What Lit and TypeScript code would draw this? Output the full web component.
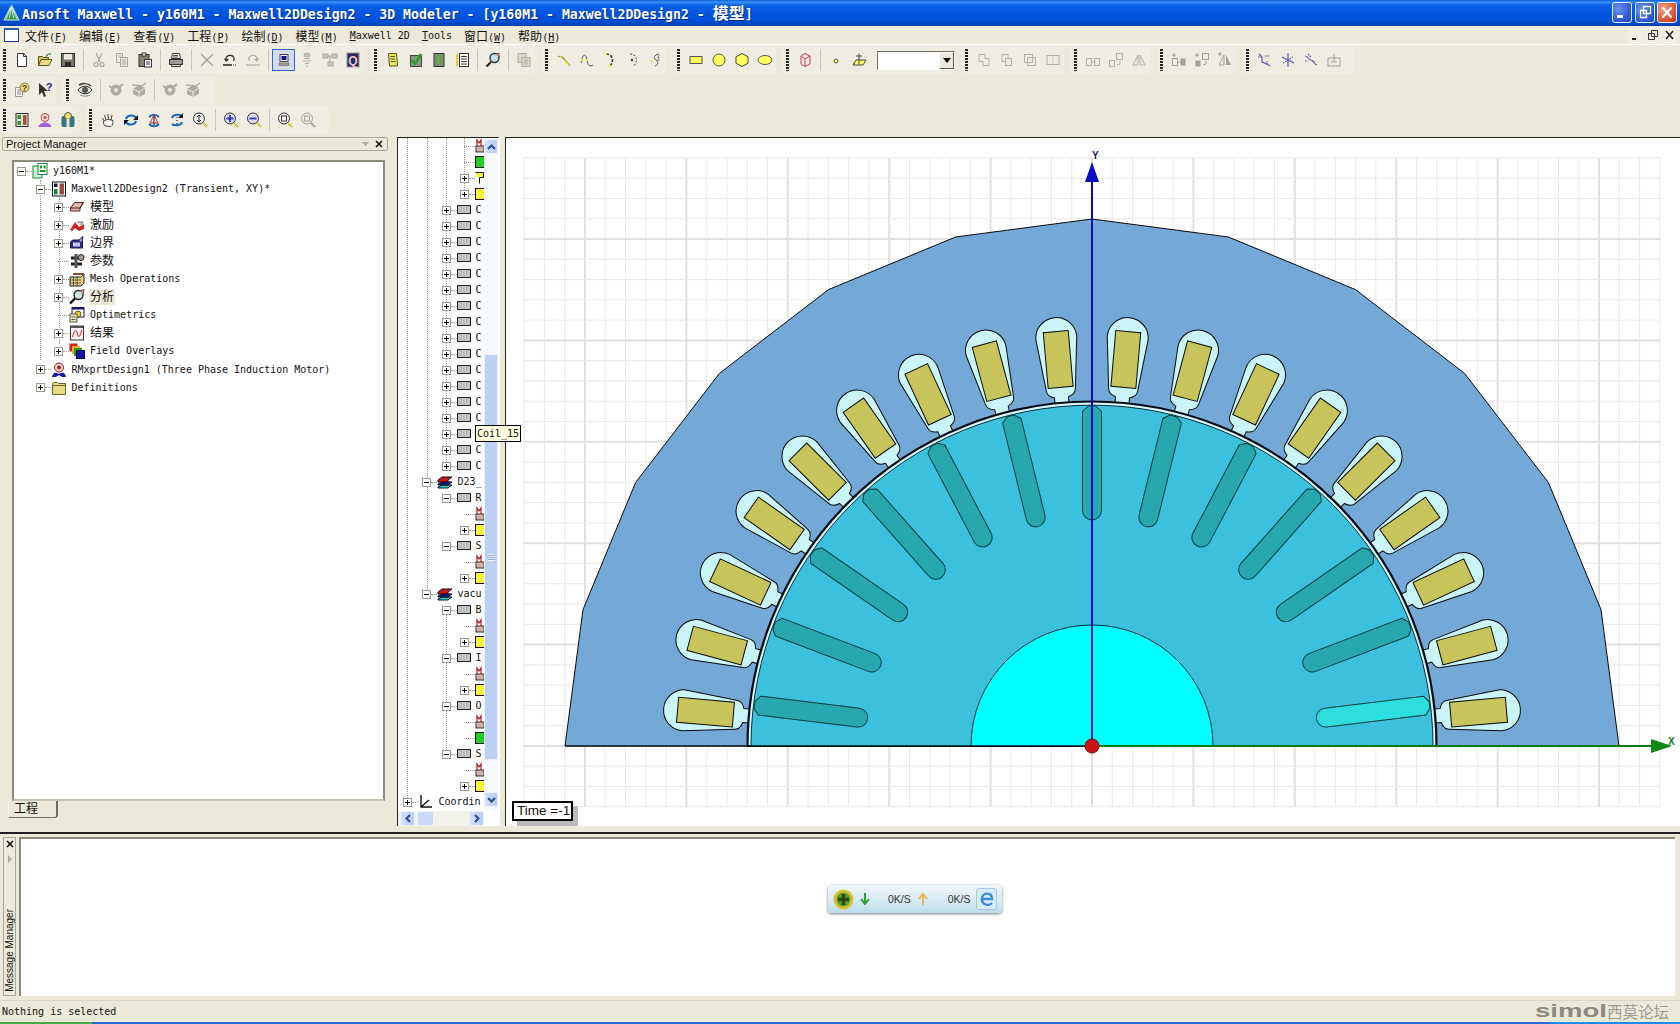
import { LitElement, html, svg, css, nothing } from "lit";
import { customElement } from "lit/decorators.js";

const icons: Record<string, any> = {
  // toolbar, row 1
  new: svg`<path d="M3.5 1.5h6l3 3v10h-9z" fill="#fff" stroke="#333"/><path d="M9.5 1.5v3h3" fill="none" stroke="#333"/>`,
  open: svg`<path d="M1.5 13.5v-9h4l1 1h5v2" fill="#d8c25c" stroke="#55551c"/><path d="M1.5 13.5l2.5-6h11l-3 6z" fill="#ecdb86" stroke="#55551c"/><path d="M9 4.5c1-2 3-3 5-2.5" stroke="#3a8a3a" fill="none" stroke-width="1.4"/>`,
  save: svg`<rect x="1.5" y="1.5" width="13" height="13" fill="#77776c" stroke="#2c2c2c"/><rect x="4" y="2" width="8" height="5.5" fill="#e8e8e0"/><rect x="5" y="10" width="6" height="4.5" fill="#2c2c2c"/>`,
  cut: svg`<g fill="none" stroke="#a8a69a" stroke-width="1.2"><path d="M5 1l4 9M11 1l-4 9"/><circle cx="5" cy="12.5" r="2"/><circle cx="11" cy="12.5" r="2"/></g>`,
  copy: svg`<g fill="#ece9d8" stroke="#a8a69a"><path d="M2.5 1.5h6v9h-6z"/><path d="M6.5 5.5h7v9h-7z"/><path d="M8 8h4M8 10h4M8 12h4M4 4h3" fill="none"/></g>`,
  paste: svg`<rect x="2" y="2.5" width="10" height="12" fill="#88836c" stroke="#333"/><rect x="5" y="1" width="4" height="3" fill="#ddd" stroke="#333"/><rect x="7.5" y="7.5" width="7" height="7.5" fill="#fff" stroke="#333"/><path d="M9 10h4M9 12h4" stroke="#333"/>`,
  print: svg`<path d="M4.5 1.5h7l1 5h-9z" fill="#fff" stroke="#333"/><path d="M1.5 7.5h13v5h-13z" fill="#9a9a90" stroke="#333"/><path d="M3.5 12.5h9v2h-9z" fill="#fff" stroke="#333"/><path d="M5 3.5h5M5 5h5" stroke="#555"/>`,
  del: svg`<path d="M2 2l12 12M14 2L2 14" stroke="#a8a69a" stroke-width="1.6"/>`,
  undo: svg`<path d="M4 9c-1-4 2-6 5-5.5s4 3 2.5 5.5" fill="none" stroke="#333" stroke-width="1.3"/><path d="M1.5 6.5l3 3.5 2.5-3z" fill="#333"/><path d="M1 13h9" stroke="#333" stroke-width="1.6"/><path d="M11 13h4" stroke="#333" stroke-dasharray="1 1"/>`,
  redo: svg`<path d="M12 9c1-4-2-6-5-5.5s-4 3-2.5 5.5" fill="none" stroke="#b0ae9e" stroke-width="1.2"/><path d="M14.5 6.5l-3 3.5-2.5-3z" fill="#b0ae9e"/><path d="M1 13h14" stroke="#b0ae9e" stroke-width="1.2"/>`,
  monitor: svg`<rect x="4" y="2.5" width="8" height="7" fill="#fff" stroke="#444"/><rect x="5.5" y="4" width="5" height="4" fill="#14148c"/><rect x="3" y="11" width="10" height="2.5" fill="#9a9a9a" stroke="#555" stroke-width=".5"/>`,
  stack: svg`<g fill="none" stroke="#b0ae9e"><ellipse cx="8" cy="3" rx="3" ry="2" fill="#c4c2b4"/><path d="M5 6.5h6M4 9h8M6 11.5h4M7 14h2"/></g>`,
  net: svg`<g fill="#c8c6b8" stroke="#aaa89a"><rect x="1" y="2" width="5" height="4"/><rect x="10" y="2" width="5" height="4"/><rect x="6" y="10" width="5" height="4"/><path d="M6 4h4M8 4v6" fill="none"/></g>`,
  q: svg`<rect x="2" y="1" width="12" height="14" fill="#28285c" stroke="#999"/><text x="8" y="12.5" text-anchor="middle" font-size="12" font-weight="700" font-family="Liberation Sans" fill="#f0c8c8">Q</text>`,
  scroll: svg`<path d="M3.5 1.5h8l1 12.5h-8z" fill="#e6e65a" stroke="#555518"/><path d="M5.5 4.5H10M5.5 7H10M6 9.5h4.5" stroke="#55551c"/>`,
  check: svg`<rect x="2.5" y="3.5" width="11" height="11" fill="#8a9a80" stroke="#444"/><path d="M4 8l3 4 6-10" fill="none" stroke="#2aa02a" stroke-width="2.6"/>`,
  excl: svg`<rect x="3" y="1.5" width="10" height="13" fill="#7e8e6a" stroke="#333"/><text x="8" y="12" text-anchor="middle" font-size="12" font-weight="700" font-family="Liberation Sans" fill="#2cd02c">!</text>`,
  list: svg`<rect x="2" y="2" width="2" height="12" fill="#ecc93c"/><rect x="5.5" y="1.5" width="9" height="13" fill="#fff" stroke="#333"/><path d="M7 4.5h6M7 7h6M7 9.5h6M7 12h6" stroke="#333"/>`,
  lens: svg`<circle cx="9.5" cy="6" r="4.500" fill="#bfe4e8" stroke="#333" stroke-width="1.4"/><path d="M6 10l-4.500 4.500" stroke="#222" stroke-width="2.2"/><path d="M11 2l3-1v4" fill="#c98" stroke="#844"/>`,
  pages: svg`<g fill="#dcd9c8" stroke="#b0ae9e"><rect x="2" y="1.5" width="8" height="9"/><rect x="6" y="5.5" width="8" height="9"/></g><path d="M8 8h4M8 10h4M8 12h4" stroke="#b0ae9e"/>`,
  line1: svg`<path d="M2 5h4l8 8" transform="rotate(4 8 8)" fill="none" stroke="#555"/><path d="M3 3.5l4 3M8 8l5 5" stroke="#dcdc30" stroke-width="1.5"/>`,
  line2: svg`<path d="M2 11c2-11 5-9 6-3s3 7 6 5" fill="none" stroke="#555"/><circle cx="3" cy="8" r="1.2" fill="#e4e430"/><circle cx="8" cy="8" r="1.2" fill="#e4e430"/>`,
  arc1: svg`<path d="M4 2c6 0 9 6 4 12" fill="none" stroke="#333" stroke-dasharray="3 1.5" stroke-width="1.5"/><circle cx="4" cy="2" r="1.2" fill="#e4e430"/><circle cx="8" cy="14" r="1.2" fill="#e4e430"/>`,
  arc2: svg`<path d="M5 2c6 0 9 6 4 12" fill="none" stroke="#444" stroke-dasharray="2 1.5"/><circle cx="7" cy="8" r="1.2" fill="#333"/>`,
  arc3: svg`<path d="M11 2c-5 1-6 4-3 6s2 5-1 6" fill="none" stroke="#555"/><text x="9" y="9" font-size="8" font-family="Liberation Serif" fill="#445">f</text><circle cx="4" cy="9" r="1" fill="#e4e430"/>`,
  rect: svg`<rect x="2" y="4.5" width="12" height="7" fill="#ffff5c" stroke="#555"/>`,
  circle: svg`<circle cx="8" cy="8" r="6" fill="#ffff5c" stroke="#555"/>`,
  hex: svg`<path d="M8 1.5l6 3.2v6.600l-6 3.200-6-3.200V4.700z" fill="#ffff5c" stroke="#444"/>`,
  ellipse: svg`<ellipse cx="8" cy="8" rx="7" ry="4.500" fill="#ffff5c" stroke="#555"/>`,
  cube: svg`<path d="M8 1.5l5 2.5v8l-5 2.500-4-2.500V4zM4 4l4 3 5-3M8 7v7.500" fill="#f4e8e8" stroke="#c04050"/>`,
  point: svg`<circle cx="8" cy="9" r="2" fill="#ffff5c" stroke="#555"/>`,
  plane: svg`<path d="M5 8h10l-3 5H2z" fill="#ffff5c" stroke="#444"/><path d="M8 1.5v11M5 4h6" stroke="#444" fill="none"/>`,
  uni: svg`<path d="M3 2.5h6v4h4v7H7v-4H3z" fill="none" stroke="#b4b2a4"/>`,
  sub: svg`<rect x="3" y="2.5" width="6" height="7" fill="none" stroke="#b4b2a4"/><rect x="6.5" y="6.5" width="6" height="7" fill="#ece9d8" stroke="#b4b2a4"/>`,
  inter: svg`<rect x="2.5" y="2.5" width="8" height="8" fill="none" stroke="#b4b2a4"/><rect x="5.5" y="5.5" width="8" height="8" fill="none" stroke="#b4b2a4"/>`,
  split: svg`<rect x="2" y="3.5" width="12" height="9" fill="none" stroke="#b4b2a4"/><path d="M8 3.5v9" stroke="#b4b2a4" stroke-dasharray="1 1"/>`,
  move: svg`<rect x="1.5" y="6.5" width="5" height="7" fill="none" stroke="#b4b2a4"/><rect x="9.5" y="6.5" width="5" height="7" fill="none" stroke="#b4b2a4"/><path d="M6 10h5" stroke="#b4b2a4"/>`,
  rot: svg`<rect x="8.5" y="1.5" width="6" height="6" fill="none" stroke="#b4b2a4"/><rect x="1.5" y="8.5" width="5" height="6" fill="none" stroke="#b4b2a4"/><path d="M12 9v3l-3 1" fill="none" stroke="#b4b2a4"/>`,
  mirror: svg`<path d="M7 3v10H2zM9 3v10h5z" fill="none" stroke="#b4b2a4"/>`,
  movep: svg`<rect x="1.5" y="6.5" width="5" height="7" fill="none" stroke="#a4a294"/><rect x="9.5" y="6.5" width="5" height="7" fill="#a4a294"/><path d="M3 1v4M1 3h4M6 10h4" stroke="#a4a294"/>`,
  rotp: svg`<rect x="8.5" y="1.5" width="6" height="6" fill="none" stroke="#a4a294"/><rect x="1.5" y="8.5" width="5" height="6" fill="#a4a294"/><path d="M3 1v4M1 3h4M12 9v3l-3 1" fill="none" stroke="#a4a294"/>`,
  mirp: svg`<path d="M7 3v10H2z" fill="none" stroke="#a4a294"/><path d="M9 3v10h5z" fill="#a4a294"/><path d="M3 0v4M1 2h4" stroke="#a4a294"/>`,
  tp1: svg`<g fill="none" stroke="#5454a8" stroke-width="1.2"><path d="M2 2l3 3v5l5 2 3 2"/><path d="M1 5h4M8 4h4M10 9v5" stroke-dasharray="1.5 1"/></g>`,
  tp2: svg`<g fill="none" stroke="#5454a8" stroke-width="1.2"><path d="M8 1v14M2 5l12 6"/><path d="M3 11l10-6" stroke-dasharray="1.5 1"/></g>`,
  tp3: svg`<g fill="none" stroke="#5454a8" stroke-width="1.2"><path d="M2 4c4 0 3 4 6 4s3 5 6 5"/><path d="M5 2l3 3M9 9l3 1M2 9h3" stroke-dasharray="1.5 1"/></g>`,
  tp4: svg`<rect x="2" y="6" width="12" height="8" fill="none" stroke="#a4a294"/><path d="M8 2v8M5 10h6" stroke="#a4a294"/>`,
  // row 2
  help: svg`<path d="M1.5 5.500h7v9h-7z" fill="#fff" stroke="#999"/><path d="M3 8h4M3 10h4M3 12h4" stroke="#888"/><circle cx="10.5" cy="5.500" r="4.500" fill="#ecdc70" stroke="#7a7a3a"/><text x="10.5" y="9" text-anchor="middle" font-size="9" font-weight="700" font-family="Liberation Sans" fill="#444">?</text>`,
  what: svg`<path d="M2 1v12l3-3 2 5 2-1-2-5h4z" fill="#333"/><text x="12" y="9" text-anchor="middle" font-size="11" font-weight="700" font-family="Liberation Sans" fill="#28287c">?</text>`,
  eye: svg`<path d="M1 8c3-5 11-5 14 0-3 5-11 5-14 0z" fill="#e0e0d8" stroke="#333"/><circle cx="8" cy="8" r="3" fill="#555"/><path d="M2 3c4-2 9-2 12 1" stroke="#444" fill="none" stroke-width="1.5"/><path d="M3 13c3 1.500 8 1.500 10 0" stroke="#888" fill="none"/>`,
  eyeg: svg`<circle cx="8" cy="8" r="5.500" fill="#aeac9e"/><path d="M1 4l7 4 7-6" stroke="#aeac9e" stroke-width="2" fill="none"/><circle cx="8" cy="8" r="2" fill="#ece9d8"/>`,
  eyeb: svg`<path d="M2 7l6-4 6 3v6l-6 3-6-3z" fill="#aeac9e"/><path d="M2 7l6 3 6-4M8 10v5" stroke="#ece9d8" fill="none"/><path d="M1 3l10 1 4-3" stroke="#aeac9e" stroke-width="1.5" fill="none"/>`,
  // row 3
  bars: svg`<rect x="2" y="1.5" width="12" height="13" fill="#e6e4d4" stroke="#333"/><rect x="3.5" y="3" width="3.5" height="4" fill="#2e9a3a"/><rect x="3.5" y="9" width="3.5" height="4" fill="#2e9a3a"/><rect x="9" y="3" width="3.5" height="10" fill="#a8503c"/>`,
  person: svg`<circle cx="8" cy="5.500" r="4" fill="#f0d8d0" stroke="#b05050"/><circle cx="8" cy="5.500" r="1.5" fill="#b05050"/><path d="M1.5 15c1-6 12-6 13 0z" fill="#a060d8"/>`,
  people: svg`<rect x="1.5" y="4" width="6" height="11" rx="2" fill="#307880"/><rect x="8.5" y="4" width="6" height="11" rx="2" fill="#307880"/><circle cx="8" cy="4" r="3.5" fill="#e8dc70" stroke="#555"/><rect x="6.5" y="7" width="3" height="7" fill="#e8e4d0"/>`,
  hand: svg`<path d="M4 9L2.500 6M6 8L4.500 3M8.500 7.500L8 2M11 8l1-5M5 14C3.500 12 3 10 4 9l2-1 2.500-.5L11 8l2 .5c0 3-.5 5-2 6z" fill="#fff" stroke="#444"/>`,
  rotA: svg`<g fill="none" stroke="#1468b8" stroke-width="2"><path d="M3 7c1-4 8-5 10-1"/><path d="M13 9c-1 4-8 5-10 1"/></g><path d="M15 3v5h-5zM1 13V8h5z" fill="#14141c"/>`,
  rotB: svg`<g fill="none" stroke="#1468b8" stroke-width="2"><path d="M3 5c3-3 7-3 10 0"/><path d="M3 12c3 3 7 3 10 0"/></g><path d="M8 3l-4 8h8z" fill="none" stroke="#c03030"/><path d="M8 4v9" stroke="#14141c"/>`,
  rotC: svg`<g fill="none" stroke="#1468b8" stroke-width="2"><path d="M3 6c1-4 8-4 10-2"/><path d="M13 10c-1 4-8 4-10 2"/></g><path d="M8 5v1M8 8v1M8 11v1" stroke="#222" stroke-width="1.2"/><path d="M14 1v5H9z" fill="#14141c"/>`,
  zoomI: svg`<circle cx="7" cy="6.500" r="5.500" fill="#eee" stroke="#333"/><path d="M7 3v7M5 5l2-2 2 2M5 8l2 2 2-2" stroke="#333" fill="none"/><path d="M11 11l4 4" stroke="#d8c830" stroke-width="2.2"/>`,
  zoomP: svg`<circle cx="7" cy="6.500" r="5.500" fill="#d8d8ec" stroke="#333"/><path d="M7 3v7M3.500 6.500h7" stroke="#3030b8" stroke-width="1.8"/><path d="M11 11l4 4" stroke="#d8c830" stroke-width="2.2"/>`,
  zoomM: svg`<circle cx="7" cy="6.500" r="5.500" fill="#d8d8ec" stroke="#333"/><path d="M3.500 6.500h7" stroke="#3030b8" stroke-width="1.8"/><path d="M11 11l4 4" stroke="#d8c830" stroke-width="2.2"/>`,
  zoomF: svg`<circle cx="7" cy="6.500" r="5.500" fill="#eee" stroke="#333"/><rect x="4.500" y="4" width="5" height="5" fill="#fff" stroke="#333"/><path d="M11 11l4 4" stroke="#d8c830" stroke-width="2.2"/>`,
  zoomD: svg`<circle cx="7" cy="6.500" r="5.500" fill="#ece9d8" stroke="#a8a69a"/><rect x="4.500" y="4" width="5" height="5" fill="none" stroke="#a8a69a"/><path d="M11 11l4 4" stroke="#a8a69a" stroke-width="2.2"/>`,
  // project tree
  proj: svg`<rect x="1" y="3" width="9" height="12" fill="#d8f4d8" stroke="#0a8a3a"/><rect x="6" y=".5" width="9" height="11" fill="#fff" stroke="#0a8a3a"/><rect x="8" y="2.5" width="2" height="3" fill="#18a018"/><rect x="11.500" y="2.5" width="2" height="3" fill="#18a018"/><rect x="8" y="7" width="5.500" height="2" fill="#18a018"/>`,
  design: svg`<rect x="1.5" y="1" width="13" height="14" fill="#fff" stroke="#111"/><rect x="3" y="2.5" width="3.5" height="3.5" fill="#222"/><rect x="3" y="8" width="3.5" height="5.500" fill="#118a44"/><rect x="8.5" y="2.5" width="4.500" height="11" fill="#9c4a3c"/>`,
  model: svg`<path d="M1.5 9l4-5.500h9L11 9v3H1.500z" fill="#e0b8b0" stroke="#5c1c1c"/><path d="M1.5 9H11l3.500-5.500" fill="none" stroke="#5c1c1c"/>`,
  excite: svg`<path d="M1 13l5-8 4 5 5-3v5l-5 2-4-3-3 3z" fill="#d02424"/><path d="M8 5h6l-2 3" fill="#c8c8c8" stroke="#777"/>`,
  bound: svg`<path d="M1.5 13V7l2-2h10v8z" fill="#30307e" stroke="#141450"/><rect x="4" y="7.5" width="7" height="4" fill="#c8c8f0"/><path d="M10 5l4-3.500-1 6" fill="#aaaacc" stroke="#141450"/>`,
  param: svg`<path d="M2 5h8M2 11h11" stroke="#222" stroke-width="3"/><path d="M7 1v14" stroke="#555" stroke-width="3"/><circle cx="12" cy="4.500" r="3" fill="#999" stroke="#222"/>`,
  mesh: svg`<path d="M1 6h11l3-3v9l-3 3H1z" fill="#e8d080" stroke="#222"/><path d="M4.500 6v9M8 6v9M1 9h11M1 12h11" stroke="#222" stroke-dasharray="1.5 .8"/><path d="M4 3h11" stroke="#8c4a3c" stroke-width="2"/>`,
  analysis: svg`<circle cx="9.5" cy="6" r="4.500" fill="#d0e4e8" stroke="#222" stroke-width="1.4"/><path d="M6 9.500l-5 5" stroke="#111" stroke-width="2.4"/><path d="M11 2l4-1.500-1 5" fill="#c89a90" stroke="#844"/>`,
  optim: svg`<rect x="3" y=".5" width="12" height="9.500" fill="#fff" stroke="#14146c"/><rect x="3" y=".5" width="12" height="2" fill="#14146c"/><circle cx="9" cy="7" r="3" fill="#ecd020" stroke="#6a5a10"/><rect x="1" y="7" width="7" height="8" fill="#f4e8b0" stroke="#555"/><path d="M2.500 10h4M2.500 12.500h4" stroke="#555"/>`,
  result: svg`<rect x="1.5" y="1" width="13" height="14" fill="#fff0f0" stroke="#333"/><rect x="1.5" y="1" width="13" height="2" fill="#555"/><path d="M3.500 12c2-8 4-8 5-3s3 2 4-4" fill="none" stroke="#c02020"/>`,
  field: svg`<rect x=".5" y=".5" width="8" height="8" fill="#d02020"/><rect x="3" y="3" width="8" height="8" fill="#e8b020"/><rect x="5" y="5" width="8" height="8" fill="#18a018"/><rect x="7.500" y="7.500" width="8" height="8" fill="#1414a8" stroke="#0a0a50"/>`,
  rmx: svg`<circle cx="8" cy="5.500" r="4.500" fill="#f0d8d0" stroke="#8c1c1c"/><circle cx="8" cy="5.500" r="2" fill="#a81c1c"/><path d="M1 15c1-5 4-5 7-3 3-2 6-2 7 3h-4l-3-2-3 2z" fill="#1414b8"/>`,
  folder: svg`<path d="M1.5 14.500v-11l1-1h4l1 1h7v11z" fill="#e8dc84" stroke="#66662a"/><path d="M1.5 5.500h13" stroke="#66662a"/>`,
  // object tree
  gray: svg`<rect x=".5" y="3.5" width="13" height="8" fill="#c0c0c0" stroke="#222"/>`,
  layer: svg`<path d="M1 13l4-2h10l-4 3H1z" fill="#20d0d0" stroke="#111"/><path d="M1 10l4-2h10l-4 3H1z" fill="#1818a0" stroke="#111"/><path d="M1 6l4-3h10l-4 3v2H1z" fill="#c81818" stroke="#111"/>`,
  m: svg`<rect x="1" y="8" width="8" height="6" fill="#d0b4a8" stroke="#333"/><path d="M2 8V2l2 3 2-3v6" fill="none" stroke="#b01818" stroke-width="1.2"/>`,
  green: svg`<rect x=".5" y="2.5" width="9" height="11" fill="#20d020" stroke="#111"/>`,
  yellow: svg`<rect x=".5" y="2.5" width="9" height="11" fill="#f4f43c" stroke="#111"/>`,
  yhook: svg`<path d="M.5 2.500h8v5h-4v6" fill="none" stroke="#111"/><path d="M1 3h7v4H1z" fill="#f4f43c"/>`,
  coord: svg`<path d="M3 1v12h11M3 13l8-7" fill="none" stroke="#111" stroke-width="1.4"/>`,
};

const ic = (name: string) =>
  html`<svg class="ic" width="16" height="16" viewBox="0 0 16 16">${icons[name]}</svg>`;

// "|" = grip, "/" = separator, "#" = combo box, "*" prefix = pressed button
const toolbars = [
  "| new open save / cut copy paste / print / del undo redo / *monitor stack net q",
  "| scroll check excl list / lens / pages",
  "| line1 line2 arc1 arc2 arc3",
  "| rect circle hex ellipse",
  "| cube / point plane #",
  "| uni sub inter split",
  "| move rot mirror",
  "| movep rotp mirp",
  "| tp1 tp2 tp3 tp4",
];
const toolbars2 = ["| help what", "| eye / eyeg eyeb / eyeg eyeb"];
const toolbars3 = ["| bars person people", "| hand rotA rotB rotC zoomI / zoomP zoomM / zoomF zoomD"];

const projectTree = [
  [0, "-", "proj", "y160M1*"],
  [1, "-", "design", "Maxwell2DDesign2 (Transient, XY)*"],
  [2, "+", "model", "模型"],
  [2, "+", "excite", "激励"],
  [2, "+", "bound", "边界"],
  [2, "", "param", "参数"],
  [2, "+", "mesh", "Mesh Operations"],
  [2, "+", "analysis", "分析", true],
  [2, "", "optim", "Optimetrics"],
  [2, "+", "result", "结果"],
  [2, "+", "field", "Field Overlays"],
  [1, "+", "rmx", "RMxprtDesign1 (Three Phase Induction Motor)"],
  [1, "+", "folder", "Definitions"],
];

const solid = (n: string) => [2, "-", "gray", n];

const sub = (last: string) => [
  [3, "", "m", ""],
  last === "green" ? [3, "", "green", ""] : [3, "+", "yellow", ""],
];

const objectTree: any[] = [
  [3, "", "m", ""],
  [3, "", "green", ""],
  [3, "+", "yhook", ""],
  [3, "+", "yellow", ""],
  // the row at index 14 sits under the Coil_15 tooltip
  ...Array.from({ length: 17 }, (_, i) => [2, "+", "gray", i === 14 ? "" : "C"]),
  [1, "-", "layer", "D23_"],
  solid("R"),
  ...sub("y"),
  solid("S"),
  ...sub("y"),
  [1, "-", "layer", "vacu"],
  solid("B"),
  ...sub("y"),
  solid("I"),
  ...sub("y"),
  solid("O"),
  ...sub("green"),
  solid("S"),
  ...sub("y"),
  [0, "+", "coord", "Coordin"],
];

@customElement("motor-view")
export class MotorView extends LitElement {
  static styles = css`
    :host {
      display: block;
      width: 100%;
      height: 100%;
    }
    svg {
      display: block;
    }
  `;

  render() {
    const cx = 1092;
    const cy = 746;
    const step = 20.28;
    const lines = [];
    for (let i = -28; i <= 28; i++) {
      const x = cx + i * step;
      const major = i % 5 === 0;
      lines.push(svg`<line x1=${x} x2=${x} y1="158" y2="807" stroke=${major ? "#e0e0e0" : "#e8e8e8"} stroke-width=${major ? 2 : 1}/>`);
    }
    for (let i = -29; i <= 3; i++) {
      const y = cy + i * step;
      const major = i % 5 === 0;
      lines.push(svg`<line x1="524" x2="1660" y1=${y} y2=${y} stroke=${major ? "#e0e0e0" : "#e8e8e8"} stroke-width=${major ? 2 : 1}/>`);
    }

    const outer = [];
    for (let a = 180; a >= 0; a -= 15) {
      const t = (a * Math.PI) / 180;
      outer.push(`${(cx + 527 * Math.cos(t)).toFixed(1)},${(cy - 527 * Math.sin(t)).toFixed(1)}`);
    }

    const slots = [];
    for (let a = 5; a < 180; a += 10) {
      slots.push(svg`<g transform="translate(${cx} ${cy}) rotate(${-a})">
        <path d="M344 -7 L350 -7 Q352 -14 357 -14.5 L409.5 -20.5 A20.5 20.5 0 0 1 409.5 20.5 L357 14.5 Q352 14 350 7 L344 7 Z" fill="#c9f5f7" stroke="#0a0a0a" stroke-width="1"/>
        <rect x="360" y="-12.5" width="56" height="25" fill="#c8c45c" stroke="#0a0a0a" stroke-width="1"/>
      </g>`);
    }

    // 26 rotor bars over the full circle, 13 of them in this half
    const bars = [];
    for (let i = -6; i <= 6; i++) {
      const a = 90 + (i * 360) / 26;
      bars.push(svg`<g transform="translate(${cx} ${cy}) rotate(${-a})">
        <path d="M235.5 -9.5 L335 -9.5 L340 -3.5 L340 3.5 L335 9.5 L235.5 9.5 A9.5 9.5 0 0 1 235.5 -9.5 Z" fill=${i === -6 ? "#2edede" : "#26a8ae"} stroke="#0a3a3a" stroke-width="1"/>
      </g>`);
    }

    const half = (r: number) => `M${cx - r} ${cy} A${r} ${r} 0 0 1 ${cx + r} ${cy} Z`;

    return html`<svg width="1175" height="689" viewBox="505 137 1175 689">
      <rect x="505" y="137" width="1175" height="689" fill="#fff"/>
      ${lines}
      <polygon points=${outer.join(" ")} fill="#74a9d7" stroke="#0a0a0a" stroke-width="1"/>
      ${slots}
      <path d=${half(344.5)} fill="#d4f6f8" stroke="#0a0a14" stroke-width="2.2"/>
      <path d=${half(341)} fill="#3bc0dd" stroke="#0a3038" stroke-width="1"/>
      ${bars}
      <path d=${half(121)} fill="#0ff" stroke="#0a3038" stroke-width="1"/>
      <line x1="565" x2=${cx} y1=${cy} y2=${cy} stroke="#0a0a0a" stroke-width="1"/>
      <line x1=${cx} x2="1655" y1=${cy} y2=${cy} stroke="#0c7a14" stroke-width="2"/>
      <path d="M1651 739l21 7-21 7z" fill="#0c8a14"/>
      <text x="1668" y="745" font-family="Liberation Sans" font-size="10" font-weight="700" fill="#0c7a14">X</text>
      <line x1=${cx} x2=${cx} y1=${cy} y2="175" stroke="#0a0ac8" stroke-width="2"/>
      <path d="M${cx - 7} 182l7-20 7 20z" fill="#0a0ac8"/>
      <text x="1092" y="159" font-family="Liberation Sans" font-size="10" font-weight="700" fill="#14146c">Y</text>
      <circle cx=${cx} cy=${cy} r="7" fill="#cc1414" stroke="#7a0a0a"/>
    </svg>`;
  }
}

@customElement("app-root")
export class AppRoot extends LitElement {
  static styles = css`
    :host {
      display: flex;
      flex-direction: column;
      position: relative;
      width: 1680px;
      height: 1024px;
      overflow: hidden;
      background: #ece9d8;
      font-family: "DejaVu Sans Mono", "Noto Sans CJK SC", monospace;
      font-size: 10px;
      color: #111;
    }
    .ic {
      display: block;
      flex: none;
    }

    /* title bar */
    .title {
      height: 26px;
      flex: none;
      display: flex;
      align-items: center;
      padding: 0 3px 1px 3px;
      box-sizing: border-box;
      background: linear-gradient(#0a5ad8 0, #3b93f7 2px, #0a62e8 5px, #0055e0 14px, #0250d8 21px, #0040b0 26px);
      color: #fff;
      font-weight: 700;
      font-size: 13.2px;
      text-shadow: 1px 1px 0 #0a2a80;
      white-space: pre;
    }
    .title .cjk {
      font-size: 16px;
      font-family: "Noto Sans CJK SC", sans-serif;
      line-height: 16px;
    }
    .logo {
      margin-right: 2px;
    }
    .winbtns {
      margin-left: auto;
      display: flex;
      gap: 2.5px;
    }
    .winbtn {
      width: 20px;
      height: 21px;
      border: 1px solid #e8eefc;
      border-radius: 3px;
      box-sizing: border-box;
      background: radial-gradient(circle at 30% 30%, #6a92ec, #2a55d0 70%, #2048b0);
    }
    .winbtn.close {
      background: radial-gradient(circle at 30% 30%, #f0a088, #d8502c 70%, #b83818);
    }
    .winbtn svg {
      display: block;
    }

    /* menu bar */
    .menu {
      height: 19px;
      flex: none;
      display: flex;
      align-items: center;
      gap: 12px;
      padding: 0 0 0 4px;
      border-bottom: 1px solid #fff;
      box-sizing: border-box;
      font-size: 10px;
      white-space: pre;
    }
    .menu .docicon {
      margin-right: -7px;
    }
    .menu .cjk {
      font-size: 12px;
    }
    .mdi {
      margin-left: auto;
      display: flex;
      gap: 1px;
      margin-right: 2px;
    }
    .mdi div {
      width: 16px;
      height: 16px;
      background: #f1efe4;
    }

    /* toolbars */
    .tbrow {
      height: 30px;
      flex: none;
      display: flex;
      gap: 7px;
      align-items: center;
    }
    .tb {
      display: flex;
      align-items: center;
      height: 28px;
      background: #efece1;
    }
    .tbrow .tb:last-child {
      padding-right: 10px;
    }
    .grip {
      width: 10px;
      height: 22px;
      flex: none;
      box-sizing: border-box;
      background: repeating-linear-gradient(#222 0 2px, transparent 2px 3px) 3px 0 / 3px 100% no-repeat;
    }
    .btn {
      width: 23px;
      height: 22px;
      display: flex;
      align-items: center;
      justify-content: center;
      flex: none;
      box-sizing: border-box;
    }
    .btn.pressed {
      border: 1px solid #316ac5;
      background: #d4dcec;
    }
    .sep {
      width: 8px;
      height: 22px;
      flex: none;
      background: linear-gradient(#c8c5b4, #c8c5b4) center / 1px 100% no-repeat;
    }
    .combo {
      width: 78px;
      height: 19px;
      margin-left: 7px;
      flex: none;
      box-sizing: border-box;
      background: #fff;
      border: 1px solid;
      border-color: #716f64 #fff #fff #716f64;
      display: flex;
      justify-content: flex-end;
    }
    .combo i {
      width: 15px;
      height: 17px;
      background: #ece9d8;
      border: 1px solid;
      box-sizing: border-box;
      border-color: #fff #555 #555 #fff;
      display: flex;
      align-items: center;
      justify-content: center;
    }
    .combo i::after {
      content: "";
      border: 4px solid transparent;
      border-top: 5px solid #000;
      border-bottom: 0;
    }

    /* main area */
    .main {
      height: 697px;
      flex: none;
      display: flex;
      padding-top: 2px;
      box-sizing: border-box;
      position: relative;
    }
    .left {
      width: 397px;
      flex: none;
      padding: 0 9px 0 2px;
      box-sizing: border-box;
      display: flex;
      flex-direction: column;
    }
    .dock {
      height: 14px;
      flex: none;
      box-sizing: border-box;
      border: 1px solid #aca899;
      border-radius: 2px;
      display: flex;
      align-items: center;
      padding: 0 4px 0 3px;
      font: 11px "Liberation Sans", sans-serif;
    }
    .dock b {
      margin-left: auto;
      display: flex;
      gap: 6px;
      align-items: center;
    }
    .tree {
      margin: 9px 3px 0 10px;
      height: 641px;
      flex: none;
      background: #fff;
      border: 2px solid;
      border-color: #8c8a7c #8c8a7c #c8c5b4 #8c8a7c;
      box-sizing: border-box;
      position: relative;
    }
    .row {
      display: flex;
      align-items: center;
      white-space: pre;
      position: relative;
    }
    .tree .row {
      height: 18.05px;
    }
    .exp {
      width: 9px;
      height: 9px;
      flex: none;
      box-sizing: border-box;
      border: 1px solid #9c9a8c;
      background:
        linear-gradient(#000, #000) center / 5px 1px no-repeat,
        #fff;
    }
    .exp.plus {
      background:
        linear-gradient(#000, #000) center / 5px 1px no-repeat,
        linear-gradient(#000, #000) center / 1px 5px no-repeat,
        #fff;
    }
    .leaf {
      width: 9px;
      flex: none;
    }
    .dots {
      flex: none;
      width: 6px;
      height: 0;
      border-top: 1px dotted #999;
    }
    .leaf + .dots {
      margin-left: -5px;
      width: 11px;
    }
    .tree .ic {
      margin-right: 4px;
    }
    .label {
      padding: 1px 1px;
      line-height: 14px;
    }
    .label.cjk {
      font-size: 12px;
    }
    .label.hl {
      background: #ece9d8;
    }
    .guide {
      position: absolute;
      border-left: 1px dotted #999;
    }
    .tab {
      margin-left: 6px;
      width: 50px;
      height: 17px;
      box-sizing: border-box;
      border: 1px solid #716f64;
      border-top: 0;
      border-left-color: #fff;
      border-radius: 0 0 3px 0;
      border-right-width: 2px;
      font-size: 12px;
      padding-left: 5px;
      line-height: 16px;
    }

    /* object tree */
    .pane {
      width: 103px;
      height: 689px;
      flex: none;
      border: solid #222;
      border-width: 1px 0 0 1px;
      border-right: 2px solid #fff;
      background: #fff;
      box-sizing: border-box;
      display: flex;
      flex-direction: column;
      position: relative;
    }
    .panebody {
      display: flex;
      height: 673px;
      flex: none;
    }
    .objs {
      width: 86px;
      flex: none;
      overflow: hidden;
      position: relative;
    }
    .objs .row {
      height: 16px;
    }
    .objs .ic.small {
      margin-right: 0;
    }
    .objs .label {
      padding: 0 0 0 5px;
    }
    .vbar {
      width: 14px;
      flex: none;
      background: #f6f8fa;
      display: flex;
      flex-direction: column;
      padding-top: 1px;
    }
    .sb {
      height: 15px;
      flex: none;
      background: linear-gradient(90deg, #d4e0fb, #b8ccf6);
      border: 1px solid #eef2fc;
      border-radius: 2px;
      box-sizing: border-box;
      display: flex;
      align-items: center;
      justify-content: center;
    }
    .thumb {
      margin-top: 200px;
      height: 406px;
      flex: none;
      background: #bcd0f6;
      border: 1px solid #eef2fc;
      border-radius: 2px;
      box-sizing: border-box;
      display: flex;
      align-items: center;
      justify-content: center;
    }
    .thumb i {
      width: 7px;
      height: 7px;
      background: repeating-linear-gradient(#eef2fc 0 1px, #8ea8dc 1px 2px);
    }
    .vbar .down {
      margin-top: 32px;
    }
    .hbar {
      height: 15px;
      flex: none;
      display: flex;
      background: #f2f1ea;
      padding-left: 2px;
      width: 84px;
    }
    .hbar .sb {
      width: 15px;
    }
    .hthumb {
      width: 17px;
      height: 15px;
      margin-left: 2px;
      background: #cbd9f6;
      border: 1px solid #eef2fc;
      border-radius: 2px;
      box-sizing: border-box;
    }
    .hbar .right {
      margin-left: auto;
    }
    .tip {
      position: absolute;
      left: 475px;
      top: 290px;
      width: 46px;
      height: 17px;
      box-sizing: border-box;
      background: #ffffe1;
      border: 1px solid #000;
      line-height: 15px;
      padding-left: 1px;
      z-index: 2;
    }

    .view {
      margin-left: 5px;
      width: 1175px;
      height: 689px;
      flex: none;
      position: relative;
    }
    .view::before {
      content: "";
      position: absolute;
      left: 0;
      top: 0;
      right: 0;
      bottom: 0;
      border: solid #222;
      border-width: 1px 0 0 1px;
      pointer-events: none;
    }
    .time {
      position: absolute;
      left: 7px;
      top: 664px;
      width: 61px;
      height: 20px;
      box-sizing: border-box;
      background: #fff;
      border: 2px solid #000;
      box-shadow: 5px 5px 0 #bbb;
      font: 13.5px/16px "Liberation Sans", sans-serif;
      padding-left: 3px;
      white-space: nowrap;
    }

    /* message manager */
    .messages {
      height: 168px;
      flex: none;
      border-top: 2px solid #222;
      display: flex;
      padding: 3px 5px 4px 3px;
      box-sizing: border-box;
      gap: 3px;
      position: relative;
    }
    .msgstrip {
      width: 13px;
      flex: none;
      border: 1px solid #aca899;
      box-sizing: border-box;
      display: flex;
      flex-direction: column;
      align-items: center;
      padding-top: 2px;
    }
    .msgstrip .arrow {
      margin-top: 7px;
    }
    .msgstrip span {
      margin-top: auto;
      writing-mode: vertical-rl;
      transform: rotate(180deg);
      font: 10px "Liberation Sans", sans-serif;
      padding-top: 3px;
    }
    .msgbody {
      flex: 1;
      background: #fff;
      border: solid #8c8a7c;
      border-width: 2px 0 0 2px;
    }
    .speed {
      position: absolute;
      left: 828px;
      top: 51px;
      width: 174px;
      height: 28px;
      box-sizing: border-box;
      border-radius: 4px;
      background: linear-gradient(#f0f7fb, #cfe6f2 70%, #b9dcec);
      box-shadow: 0 1px 3px #777;
      display: flex;
      align-items: center;
      padding: 0 5px;
      font: 10.5px "Liberation Sans", sans-serif;
      color: #333;
    }
    .speed .down {
      margin-left: 6px;
    }
    .speed .kb1 {
      margin-left: 18px;
    }
    .speed .up {
      margin-left: 7px;
    }
    .speed .kb2 {
      margin-left: 20px;
    }
    .speed .ie {
      margin-left: auto;
      width: 21px;
      height: 22px;
      border: 1px solid #a8c8de;
      border-radius: 3px;
      box-sizing: border-box;
      display: flex;
      align-items: center;
      justify-content: center;
      background: #d8ecf6;
    }

    /* status bar */
    .status {
      height: 22px;
      flex: none;
      border-top: 1px solid #d8d5c4;
      box-sizing: border-box;
      padding: 4px 0 0 2px;
      line-height: 14px;
      position: relative;
    }
    .wm {
      position: absolute;
      left: 1535px;
      top: 0;
      display: flex;
      align-items: center;
      height: 20px;
      color: #8a8a80;
    }
    .wm b {
      font: 700 19px/20px "Liberation Sans", sans-serif;
      display: inline-block;
      width: 70px;
      transform: scaleX(1.45);
      transform-origin: 0 50%;
    }
    .wm span {
      margin-left: 2px;
      font: 15.5px/20px "Noto Sans CJK SC", sans-serif;
      color: #9c9c94;
    }
    .task {
      height: 4px;
      flex: none;
      background: linear-gradient(90deg, #4caa4c 0 92px, #2a6ad8 92px 1550px, #1c8ee8 1550px);
    }
  `;

  private toolbar(spec: string) {
    return html`<div class="tb">
      ${spec.split(" ").map((t) => {
        if (t === "|") return html`<div class="grip"></div>`;
        if (t === "/") return html`<div class="sep"></div>`;
        if (t === "#") return html`<div class="combo"><i></i></div>`;
        if (t[0] === "*") return html`<div class="btn pressed">${ic(t.slice(1))}</div>`;
        return html`<div class="btn">${ic(t)}</div>`;
      })}
    </div>`;
  }

  private treeRow(row: any[]) {
    const [lvl, exp, icon, label, hl] = row;
    const isCjk = /[^\x00-\x7f]/.test(label);
    return html`<div class="row" style="padding-left:${3 + lvl * 18.5}px">
      ${exp ? html`<div class="exp ${exp === "+" ? "plus" : ""}"></div>` : html`<div class="leaf"></div>`}
      <div class="dots"></div>
      ${ic(icon)}
      <span class="label ${isCjk ? "cjk" : ""} ${hl ? "hl" : ""}">${label}</span>
    </div>`;
  }

  private objRow(row: any[]) {
    const [lvl, exp, icon, label] = row;
    const pad = [4.5, 23.5, 43.5, 61.5][lvl];
    const w = icon === "layer" || icon === "coord" ? 16 : 14;
    return html`<div class="row" style="padding-left:${pad}px">
      ${exp ? html`<div class="exp ${exp === "+" ? "plus" : ""}"></div>` : html`<div class="leaf"></div>`}
      <div class="dots"></div>
      <svg class="ic small" width=${w} height="16" viewBox="0 0 ${w} 16">${icons[icon]}</svg>
      ${label ? html`<span class="label">${label}</span>` : nothing}
    </div>`;
  }

  render() {
    // vertical guide lines of the object tree: x, top, height (inside the list)
    const objGuides = [
      [9, 0, 664],
      [28.5, 0, 456],
      [48, 0, 328],
      [66, 0, 56],
      [48, 472, 144],
    ];
    return html`
      <div class="title">
        <svg class="logo" width="17" height="18" viewBox="0 0 17 18">
          <path d="M8.5 1L1 16h15z" fill="#2e9a4a" stroke="#d8e8d8"/>
          <path d="M8.5 3l-2 11M8.5 3l2 11M8.5 3L3 15M8.5 3L14 15" stroke="#fff" stroke-width=".8"/>
        </svg>
        <span>Ansoft Maxwell - y160M1 - Maxwell2DDesign2 - 3D Modeler - [y160M1 - Maxwell2DDesign2 - <span class="cjk">模型</span>]</span>
        <div class="winbtns">
          <div class="winbtn"><svg width="18" height="19"><rect x="4" y="12" width="6" height="3" fill="#fff"/></svg></div>
          <div class="winbtn"><svg width="18" height="19"><path d="M7.5 3.5h7v7h-7zM4.5 7.5h6v7h-6z" fill="none" stroke="#fff" stroke-width="1.3"/></svg></div>
          <div class="winbtn close"><svg width="18" height="19"><path d="M4.5 4.5l9 10M13.5 4.5l-9 10" stroke="#fff" stroke-width="2"/></svg></div>
        </div>
      </div>

      <div class="menu">
        <svg class="docicon" width="16" height="16" viewBox="0 0 16 16"><rect x=".5" y="1.5" width="14" height="13" fill="#fff" stroke="#1c3c8c"/><path d="M0 2h15" stroke="#2a5ab8" stroke-width="2"/></svg>
        <span><span class="cjk">文件</span>(<u>F</u>)</span>
        <span><span class="cjk">编辑</span>(<u>E</u>)</span>
        <span><span class="cjk">查看</span>(<u>V</u>)</span>
        <span><span class="cjk">工程</span>(<u>P</u>)</span>
        <span><span class="cjk">绘制</span>(<u>D</u>)</span>
        <span><span class="cjk">模型</span>(<u>M</u>)</span>
        <span><u>M</u>axwell 2D</span>
        <span><u>T</u>ools</span>
        <span><span class="cjk">窗口</span>(<u>W</u>)</span>
        <span><span class="cjk">帮助</span>(<u>H</u>)</span>
        <div class="mdi">
          <div><svg width="16" height="16"><rect x="4" y="11" width="4" height="2" fill="#222"/></svg></div>
          <div><svg width="16" height="16"><path d="M6.5 3.5h6v6h-6zM3.5 6.5h6v6h-6z" fill="#f1efe4" stroke="#333"/></svg></div>
          <div><svg width="16" height="16"><path d="M4 4l7 8M11 4l-7 8" stroke="#222" stroke-width="1.6"/></svg></div>
        </div>
      </div>

      <div class="tbrow">${toolbars.map((t) => this.toolbar(t))}</div>
      <div class="tbrow">${toolbars2.map((t) => this.toolbar(t))}</div>
      <div class="tbrow">${toolbars3.map((t) => this.toolbar(t))}</div>

      <div class="main">
        <div class="left">
          <div class="dock">
            Project Manager
            <b>
              <svg width="7" height="5"><path d="M0 0h7L3.5 4z" fill="#aaa"/></svg>
              <svg width="8" height="8"><path d="M1 1l6 6M7 1l-6 6" stroke="#111" stroke-width="1.6"/></svg>
            </b>
          </div>
          <div class="tree">
            <div class="guide" style="left:26px;top:18px;height:180px"></div>
            <div class="guide" style="left:45px;top:36px;height:146px"></div>
            ${projectTree.map((r) => this.treeRow(r))}
          </div>
          <div class="tab">工程</div>
        </div>

        <div class="pane">
          <div class="panebody">
            <div class="objs">
              ${objGuides.map(([x, t, h]) => html`<div class="guide" style="left:${x}px;top:${t}px;height:${h}px"></div>`)}
              ${objectTree.map((r) => this.objRow(r))}
            </div>
            <div class="vbar">
              <div class="sb"><svg width="9" height="6"><path d="M1 5l3.5-3.5L8 5" fill="none" stroke="#2a4a90" stroke-width="2"/></svg></div>
              <div class="thumb"><i></i></div>
              <div class="sb down"><svg width="9" height="6"><path d="M1 1l3.5 3.5L8 1" fill="none" stroke="#2a4a90" stroke-width="2"/></svg></div>
            </div>
          </div>
          <div class="hbar">
            <div class="sb"><svg width="6" height="9"><path d="M5 1L1.500 4.500 5 8" fill="none" stroke="#2a4a90" stroke-width="2"/></svg></div>
            <div class="hthumb"></div>
            <div class="sb right"><svg width="6" height="9"><path d="M1 1l3.5 3.500L1 8" fill="none" stroke="#2a4a90" stroke-width="2"/></svg></div>
          </div>
        </div>

        <div class="view">
          <motor-view></motor-view>
          <div class="time">Time =-1</div>
        </div>
        <div class="tip">Coil_15</div>
      </div>

      <div class="messages">
        <div class="msgstrip">
          <svg width="8" height="8"><path d="M1 1l6 6M7 1l-6 6" stroke="#111" stroke-width="1.6"/></svg>
          <svg class="arrow" width="6" height="8"><path d="M1 0l4 4-4 4z" fill="#aaa"/></svg>
          <span>Message Manager</span>
        </div>
        <div class="msgbody"></div>
        <div class="speed">
          <svg width="21" height="21" viewBox="0 0 21 21"><circle cx="10.5" cy="10.5" r="10" fill="#d8c030"/><circle cx="10.5" cy="10.5" r="7" fill="#5aa02a"/><path d="M10.5 5v11M5 10.5h11" stroke="#2a4a10" stroke-width="3.5"/></svg>
          <svg class="down" width="10" height="12" viewBox="0 0 10 12"><path d="M5 0v10M1 6l4 5 4-5" fill="none" stroke="#2aa02a" stroke-width="2"/></svg>
          <span class="kb1">0K/S</span>
          <svg class="up" width="10" height="12" viewBox="0 0 10 12"><path d="M5 12V2M1 6l4-5 4 5" fill="none" stroke="#ecb850" stroke-width="2"/></svg>
          <span class="kb2">0K/S</span>
          <div class="ie">
            <svg width="16" height="16" viewBox="0 0 16 16"><path d="M3 8h10c0-7-9-7-10-1s6 9 10 5" fill="none" stroke="#3a8ad8" stroke-width="2.4"/></svg>
          </div>
        </div>
      </div>

      <div class="status">
        Nothing is selected
        <div class="wm"><b>simol</b><span>西莫论坛</span></div>
      </div>
      <div class="task"></div>
    `;
  }
}
